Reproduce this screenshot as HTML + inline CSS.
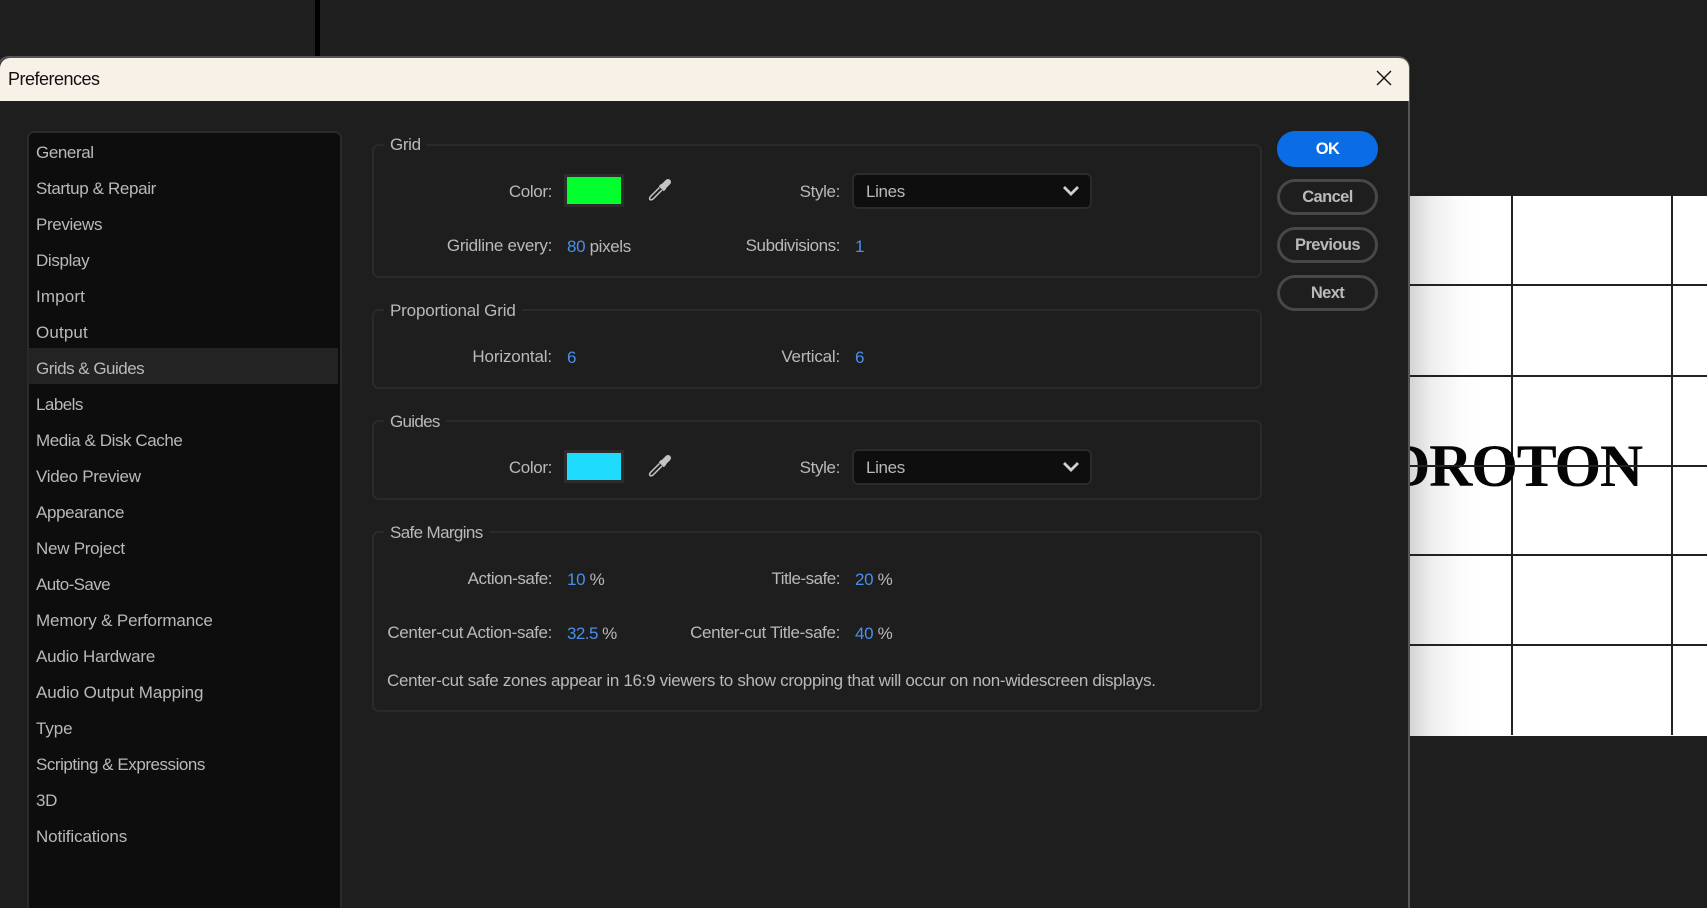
<!DOCTYPE html>
<html lang="en">
<head>
<meta charset="utf-8">
<title>Preferences</title>
<style>
html,body{margin:0;padding:0;background:#1e1e1e;width:1707px;height:908px;overflow:hidden;}
#p{position:relative;width:1707px;height:908px;overflow:hidden;background:#1e1e1e;font-family:"Liberation Sans",sans-serif;font-size:17px;color:#b9b9b9;}
#p div{position:absolute;box-sizing:border-box;}
.t{line-height:24px;height:24px;white-space:nowrap;letter-spacing:-.36px;}
.v{color:#4a8fe8;}
.v i{font-style:normal;color:#b9b9b9;}
.g{border:2px solid #2a2a2a;border-radius:7px;left:372px;width:890px;}
.lg{left:384px;background:#1e1e1e;padding:0 6px;line-height:24px;height:24px;white-space:nowrap;letter-spacing:-.36px;}
.b{left:1277px;width:101px;height:36px;border-radius:18px;border:3px solid #484848;text-align:center;line-height:31px;font-weight:700;font-size:16.5px;letter-spacing:-.6px;color:#b9b9b9;}
.sw{left:564px;width:60px;height:33px;background:#2c2c2c;padding:3px;}
.sel{left:852px;width:240px;height:36px;background:#0e0e0e;border:2px solid #2b2b2b;border-radius:6px;padding-left:12px;line-height:33px;letter-spacing:-.36px;}
.hl{left:1410px;width:297px;height:2px;background:#222;}
.vl{top:196px;width:2px;height:539px;background:#222;}
</style>
</head>
<body>
<div id="p">
<!-- background vertical line -->
<div style="left:315px;top:0;width:5px;height:58px;background:#000"></div>

<!-- canvas -->
<div style="left:1410px;top:196px;width:297px;height:540px;background:#fff;overflow:hidden">
  <div style="left:0;top:0;width:70px;height:540px;background:linear-gradient(90deg,#d4d4d4,#eee 30%,#fbfbfb 70%,#fff)"></div>
</div>
<div class="hl" style="top:284px"></div>
<div class="hl" style="top:375px"></div>
<div class="hl" style="top:554px"></div>
<div class="hl" style="top:644px"></div>
<div class="vl" style="left:1511px"></div>
<div class="vl" style="left:1671px"></div>
<div style="left:1387px;top:431px;font-family:'Liberation Serif',serif;font-weight:700;font-size:60px;line-height:70px;letter-spacing:-1.2px;color:#050505;white-space:nowrap">DROTON</div>
<div class="hl" style="top:465px"></div>

<!-- dialog -->
<div style="left:-3px;top:56px;width:1413px;height:852px;background:#1e1e1e;border:2px solid #555;border-bottom:0;border-radius:12px 12px 0 0"></div>
<div style="left:0;top:58px;width:1409px;height:43px;background:#f8f1e7;border-radius:10px 10px 0 0"></div>
<div style="left:8px;top:67px;font-size:18px;line-height:24px;color:#111;letter-spacing:-.5px;white-space:nowrap">Preferences</div>
<svg style="position:absolute;left:1376px;top:70px" width="16" height="16" viewBox="0 0 16 16"><path d="M1 1L15 15M15 1L1 15" stroke="#111" stroke-width="1.4" fill="none"/></svg>

<!-- sidebar -->
<div style="left:27px;top:131px;width:315px;height:777px;background:#0d0d0d;border:2px solid #2a2a2a;border-bottom:0;border-radius:7px 7px 0 0"></div>
<div style="left:29px;top:348px;width:309px;height:36px;background:#232323"></div>
<div class="t" style="left:36px;top:141px;letter-spacing:-.4px">General</div>
<div class="t" style="left:36px;top:177px">Startup &amp; Repair</div>
<div class="t" style="left:36px;top:213px">Previews</div>
<div class="t" style="left:36px;top:249px">Display</div>
<div class="t" style="left:36px;top:285px;letter-spacing:.14px">Import</div>
<div class="t" style="left:36px;top:321px;letter-spacing:.14px">Output</div>
<div class="t" style="left:36px;top:357px;letter-spacing:-.51px">Grids &amp; Guides</div>
<div class="t" style="left:36px;top:393px;letter-spacing:-.54px">Labels</div>
<div class="t" style="left:36px;top:429px;letter-spacing:-.42px">Media &amp; Disk Cache</div>
<div class="t" style="left:36px;top:465px;letter-spacing:-.28px">Video Preview</div>
<div class="t" style="left:36px;top:501px">Appearance</div>
<div class="t" style="left:36px;top:537px;letter-spacing:-.26px">New Project</div>
<div class="t" style="left:36px;top:573px;letter-spacing:-.6px">Auto-Save</div>
<div class="t" style="left:36px;top:609px;letter-spacing:-.14px">Memory &amp; Performance</div>
<div class="t" style="left:36px;top:645px;letter-spacing:-.2px">Audio Hardware</div>
<div class="t" style="left:36px;top:681px;letter-spacing:-.09px">Audio Output Mapping</div>
<div class="t" style="left:36px;top:717px;letter-spacing:-.1px">Type</div>
<div class="t" style="left:36px;top:753px;letter-spacing:-.46px">Scripting &amp; Expressions</div>
<div class="t" style="left:36px;top:789px">3D</div>
<div class="t" style="left:36px;top:825px;letter-spacing:-.11px">Notifications</div>

<!-- Grid -->
<div class="g" style="top:144px;height:134px"></div>
<div class="lg" style="top:133px">Grid</div>
<div class="t" style="right:1155px;top:180px">Color:</div>
<div class="sw" style="top:174px"><div style="left:3px;top:3px;width:54px;height:27px;background:#00ff2c"></div></div>
<svg style="position:absolute;left:648px;top:178px" width="24" height="24" viewBox="0 0 24 24"><path d="M11.5 9.5L2.5 18.5Q1 20.5 2 21.5Q3 22.5 5 21L14 12" stroke="#c4c4c4" stroke-width="1.5" fill="none"/><path d="M15.5 8.5L20 4" stroke="#c4c4c4" stroke-width="6" stroke-linecap="round"/><path d="M12 7L17 12" stroke="#c4c4c4" stroke-width="3.5"/></svg>
<div class="t" style="right:867px;top:180px">Style:</div>
<div class="sel" style="top:173px">Lines</div>
<svg style="position:absolute;left:1062px;top:184px" width="18" height="14" viewBox="0 0 18 14"><path d="M2 3L9 10L16 3" stroke="#cfcfcf" stroke-width="2.8" fill="none"/></svg>
<div class="t" style="right:1155px;top:234px;letter-spacing:-.3px">Gridline every:</div>
<div class="t v" style="left:567px;top:235px">80 <i>pixels</i></div>
<div class="t" style="right:867px;top:234px;letter-spacing:-.45px">Subdivisions:</div>
<div class="t v" style="left:855px;top:235px">1</div>

<!-- Proportional -->
<div class="g" style="top:309px;height:80px"></div>
<div class="lg" style="top:299px;letter-spacing:-.17px">Proportional Grid</div>
<div class="t" style="right:1155px;top:345px;letter-spacing:-.15px">Horizontal:</div>
<div class="t v" style="left:567px;top:346px">6</div>
<div class="t" style="right:867px;top:345px;letter-spacing:-.2px">Vertical:</div>
<div class="t v" style="left:855px;top:346px">6</div>

<!-- Guides -->
<div class="g" style="top:420px;height:80px"></div>
<div class="lg" style="top:410px;letter-spacing:-.7px">Guides</div>
<div class="t" style="right:1155px;top:456px">Color:</div>
<div class="sw" style="top:450px"><div style="left:3px;top:3px;width:54px;height:27px;background:#1fdcff"></div></div>
<svg style="position:absolute;left:648px;top:454px" width="24" height="24" viewBox="0 0 24 24"><path d="M11.5 9.5L2.5 18.5Q1 20.5 2 21.5Q3 22.5 5 21L14 12" stroke="#c4c4c4" stroke-width="1.5" fill="none"/><path d="M15.5 8.5L20 4" stroke="#c4c4c4" stroke-width="6" stroke-linecap="round"/><path d="M12 7L17 12" stroke="#c4c4c4" stroke-width="3.5"/></svg>
<div class="t" style="right:867px;top:456px">Style:</div>
<div class="sel" style="top:449px">Lines</div>
<svg style="position:absolute;left:1062px;top:460px" width="18" height="14" viewBox="0 0 18 14"><path d="M2 3L9 10L16 3" stroke="#cfcfcf" stroke-width="2.8" fill="none"/></svg>

<!-- Safe Margins -->
<div class="g" style="top:531px;height:181px"></div>
<div class="lg" style="top:521px;letter-spacing:-.63px">Safe Margins</div>
<div class="t" style="right:1155px;top:567px;letter-spacing:-.45px">Action-safe:</div>
<div class="t v" style="left:567px;top:568px">10 <i>%</i></div>
<div class="t" style="right:867px;top:567px;letter-spacing:-.5px">Title-safe:</div>
<div class="t v" style="left:855px;top:568px">20 <i>%</i></div>
<div class="t" style="right:1155px;top:621px">Center-cut Action-safe:</div>
<div class="t v" style="left:567px;top:622px;letter-spacing:-.55px">32.5 <i>%</i></div>
<div class="t" style="right:867px;top:621px">Center-cut Title-safe:</div>
<div class="t v" style="left:855px;top:622px">40 <i>%</i></div>
<div class="t" style="left:387px;top:669px;letter-spacing:-.32px">Center-cut safe zones appear in 16:9 viewers to show cropping that will occur on non-widescreen displays.</div>

<!-- Buttons -->
<div class="b" style="top:131px;background:#0a6de6;border-color:#0a6de6;color:#fff">OK</div>
<div class="b" style="top:179px">Cancel</div>
<div class="b" style="top:227px">Previous</div>
<div class="b" style="top:275px">Next</div>
</div>
</body>
</html>
